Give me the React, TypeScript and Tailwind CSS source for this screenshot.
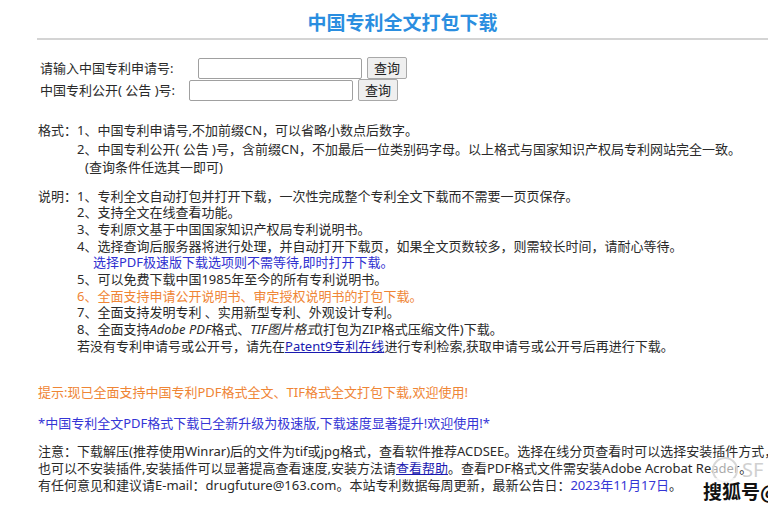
import React from "react";

const font = { fontFamily: '"Noto Sans", "Noto Sans CJK SC", sans-serif' };

export default function App() {
  return (
    <div
      className="relative w-[768px] h-[510px] overflow-hidden bg-white text-[13px] text-[#2a2a2a]"
      style={font}
    >
      <div className="pl-[37px]">
        <h1 className="pt-[10px] h-[38px] text-center text-[19px] leading-[26px] font-bold text-[#2a8ee0]">
          中国专利全文打包下载
        </h1>
        <div className="border-t-2 border-[#d4d4d4]" />

        <div className="pl-[3px] pt-[17px] flex flex-col">
          <div className="flex items-center h-[22px]">
            <span className="w-[158px] leading-[17px] whitespace-nowrap">请输入中国专利申请号:</span>
            <div className="w-[164px] h-[21px] border border-[#a0a0a0] rounded-[2px] bg-white" />
            <button className="ml-[5px] w-[40px] h-[22px] border border-[#a8a8a8] rounded-[2px] bg-[#efefef] text-[13px] leading-[17px] text-[#222]">
              查询
            </button>
          </div>
          <div className="flex items-center h-[22px]">
            <span className="w-[149px] leading-[17px] whitespace-nowrap">中国专利公开( 公告 )号:</span>
            <div className="w-[164px] h-[21px] border border-[#a0a0a0] rounded-[2px] bg-white" />
            <button className="ml-[5px] w-[40px] h-[22px] border border-[#a8a8a8] rounded-[2px] bg-[#efefef] text-[13px] leading-[17px] text-[#222]">
              查询
            </button>
          </div>
        </div>

        <div className="pl-[1px] mt-[20px] flex leading-[18.5px]">
          <span className="w-[39px] shrink-0 whitespace-nowrap">格式：</span>
          <div className="flex flex-col whitespace-nowrap">
            <span>1、中国专利申请号,不加前缀CN，可以省略小数点后数字。</span>
            <span>
              2、中国专利公开( 公告 )号，含前缀CN，不加最后一位类别码字母。以上格式与国家知识产权局专利网站完全一致。
            </span>
            <span className="pl-[8px]">(查询条件任选其一即可)</span>
          </div>
        </div>

        <div className="pl-[1px] mt-[11px] flex leading-[16.7px]">
          <span className="w-[39px] shrink-0 whitespace-nowrap">说明：</span>
          <div className="flex flex-col whitespace-nowrap">
            <span>1、专利全文自动打包并打开下载，一次性完成整个专利全文下载而不需要一页页保存。</span>
            <span>2、支持全文在线查看功能。</span>
            <span>3、专利原文基于中国国家知识产权局专利说明书。</span>
            <span>4、选择查询后服务器将进行处理，并自动打开下载页，如果全文页数较多，则需较长时间，请耐心等待。</span>
            <span className="pl-[16px] text-[#3030d0]">选择PDF极速版下载选项则不需等待,即时打开下载。</span>
            <span>5、可以免费下载中国1985年至今的所有专利说明书。</span>
            <span className="text-[#ef8535]">6、全面支持申请公开说明书、审定授权说明书的打包下载。</span>
            <span>7、全面支持发明专利 、实用新型专利、外观设计专利。</span>
            <span>
              8、全面支持<i>Adobe PDF</i>格式、<i>TIF图片格式</i>(打包为ZIP格式压缩文件)下载。
            </span>
            <span>
              若没有专利申请号或公开号，请先在
              <span className="text-[#1a1ab0] underline">Patent9专利在线</span>
              进行专利检索,获取申请号或公开号后再进行下载。
            </span>
          </div>
        </div>

        <div className="pl-[1px] mt-[29px] leading-[17px] text-[#ef8535] whitespace-nowrap">
          提示:现已全面支持中国专利PDF格式全文、TIF格式全文打包下载,欢迎使用!
        </div>
        <div className="pl-[1px] mt-[14px] leading-[17px] text-[#3535d5] whitespace-nowrap">
          *中国专利全文PDF格式下载已全新升级为极速版,下载速度显著提升!欢迎使用!*
        </div>

        <div className="pl-[1px] mt-[11px] flex flex-col leading-[17px] whitespace-nowrap">
          <span>
            注意：下载解压(推荐使用Winrar)后的文件为tif或jpg格式，查看软件推荐ACDSEE。选择在线分页查看时可以选择安装插件方式，
          </span>
          <span>
            也可以不安装插件,安装插件可以显著提高查看速度,安装方法请
            <span className="text-[#1a1ab0] underline">查看帮助</span>
            。查看PDF格式文件需安装Adobe Acrobat Reader。
          </span>
          <span>
            有任何意见和建议请E-mail：drugfuture@163.com。本站专利数据每周更新，最新公告日：
            <span className="text-[#3535d5]">2023年11月17日</span>。
          </span>
        </div>
      </div>

      <div className="absolute left-[712px] top-[457px] w-[26px] h-[26px] rounded-full border-2 border-[#d8d8d8] bg-white/60" />
      <div className="absolute left-[742px] top-[458px] text-[20px] leading-[24px] text-[#d0d0d0]">SF</div>
      <div
        className="absolute left-[703px] top-[478px] text-[19px] leading-[26px] font-bold text-[#111] bg-white/70 pr-2 whitespace-nowrap"
        style={{ fontFamily: '"Noto Sans CJK SC", sans-serif' }}
      >
        搜狐号@
      </div>
    </div>
  );
}
